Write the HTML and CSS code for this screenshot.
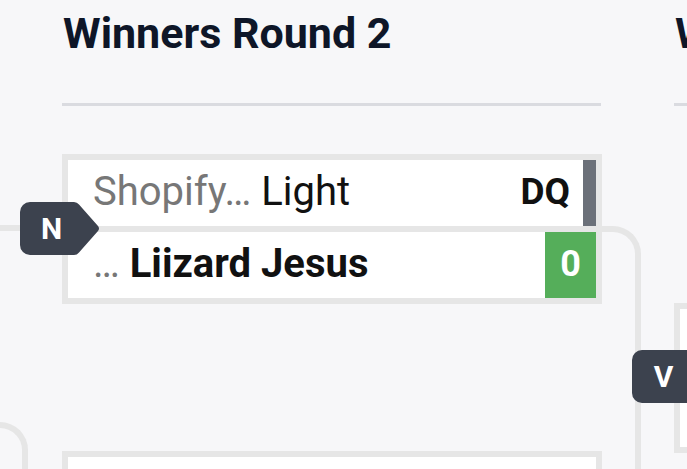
FILE: index.html
```html
<!DOCTYPE html>
<html lang="en">
<head>
  <meta charset="UTF-8" />
  <meta name="viewport" content="width=device-width, initial-scale=1.0"/>
  <title>Bracket</title>
  <link rel="stylesheet" href="styles.css">
</head>
<body>
  <div class="bracket">

    <!-- CONNECTORS -->
    <div class="line line-in"></div>
    <div class="line line-out"></div>
    <div class="line line-in-low"></div>

    <!-- WINNERS ROUND 2 -->
    <section class="round">
      <h2 class="round-title">Winners Round 2</h2>
      <div class="round-rule"></div>
      <div class="matches">
        <div class="match">
          <div class="player">
            <span class="name"><span class="team">Shopify…</span> Light</span>
            <span class="score-text">DQ</span>
            <span class="score-bar"></span>
          </div>
          <div class="player winner">
            <span class="name"><span class="team">…</span> Liizard Jesus</span>
            <span class="score score-win">0</span>
          </div>
        </div>
        <div class="match">
          <div class="player"><span class="name"></span></div>
          <div class="player"><span class="name"></span></div>
        </div>
      </div>
    </section>

    <!-- WINNERS ROUND 3 -->
    <section class="round">
      <h2 class="round-title">Winners Round 3</h2>
      <div class="round-rule"></div>
      <div class="matches matches-late">
        <div class="match">
          <div class="player"><span class="name"></span></div>
          <div class="player"><span class="name"></span></div>
        </div>
      </div>
    </section>

    <!-- BADGES -->
    <div class="badge badge-n">
      <svg width="80" height="53" viewBox="0 0 80 53"><path d="M10 0H54Q57 0 59 2.5L78 24Q80 26.5 78 29L59 50.5Q57 53 54 53H10A10 10 0 0 1 0 43V10A10 10 0 0 1 10 0Z" fill="#3c424e"/></svg>
      <span>N</span>
    </div>
    <div class="badge badge-v">
      <svg width="80" height="53" viewBox="0 0 80 53"><path d="M10 0H54Q57 0 59 2.5L78 24Q80 26.5 78 29L59 50.5Q57 53 54 53H10A10 10 0 0 1 0 43V10A10 10 0 0 1 10 0Z" fill="#3c424e"/></svg>
      <span>V</span>
    </div>
  </div>
</body>
</html>
```

FILE: styles.css
```css
html, body {
  margin: 0;
  padding: 0;
  height: 100%;
  overflow: hidden;
  background: #f7f7f9;
  font-family: Roboto, 'Liberation Sans', sans-serif;
}

.bracket {
  position: relative;
  display: flex;
  gap: 72px;
  padding-left: 62px;
}

.round {
  flex: 0 0 540px;
}

.round-title {
  margin: 12px 0 0 1px;
  font-size: 43px;
  line-height: 43px;
  font-weight: 700;
  color: #0e1628;
  white-space: nowrap;
}

.round-rule {
  height: 3px;
  margin-top: 48px;
  width: 539px;
  background: #dadbe0;
}

.matches {
  display: flex;
  flex-direction: column;
  gap: 147px;
  margin-top: 48px;
}

.matches-late {
  margin-top: 197px;
}

.match {
  display: flex;
  flex-direction: column;
  gap: 6px;
  padding: 6px;
  background: #e6e6e6;
}

.player {
  display: flex;
  align-items: center;
  height: 66px;
  background: #fff;
  color: #111;
}

.name {
  flex: 1;
  padding: 0 0 3px 25px;
  font-size: 40px;
  white-space: nowrap;
  overflow: hidden;
}

.team {
  color: #777;
  font-weight: 400;
}

.winner .name {
  font-weight: 700;
}

.score-text {
  padding: 0 13px 3px 0;
  font-size: 37px;
  font-weight: 700;
}

.score-bar {
  align-self: stretch;
  width: 13px;
  background: #6b7079;
}

.score {
  align-self: stretch;
  display: flex;
  align-items: center;
  justify-content: center;
  width: 51px;
  padding-bottom: 2px;
  box-sizing: border-box;
  font-size: 36px;
  font-weight: 700;
}

.score-win {
  background: #55ae5a;
  color: #fff;
}

/* CONNECTORS */
.line {
  position: absolute;
  box-sizing: border-box;
  border-color: #e6e6e6;
  border-style: solid;
  border-width: 0;
}

.line-in {
  left: 0;
  top: 225px;
  width: 62px;
  height: 6px;
  background: #e6e6e6;
}

.line-out {
  left: 596px;
  top: 226px;
  width: 45px;
  height: 300px;
  border-top-width: 6px;
  border-right-width: 6px;
  border-top-right-radius: 28px;
}

.line-in-low {
  left: -40px;
  top: 422px;
  width: 68px;
  height: 120px;
  border-top-width: 6px;
  border-right-width: 6px;
  border-top-right-radius: 28px;
}

/* BADGES */
.badge {
  position: absolute;
  width: 80px;
  height: 53px;
}

.badge svg {
  display: block;
}

.badge span {
  position: absolute;
  left: 0;
  top: 0;
  width: 63px;
  line-height: 53px;
  text-align: center;
  color: #fff;
  font-size: 30px;
  font-weight: 700;
}

.badge-n {
  left: 20px;
  top: 202px;
}

.badge-v {
  left: 632px;
  top: 350px;
}
```
